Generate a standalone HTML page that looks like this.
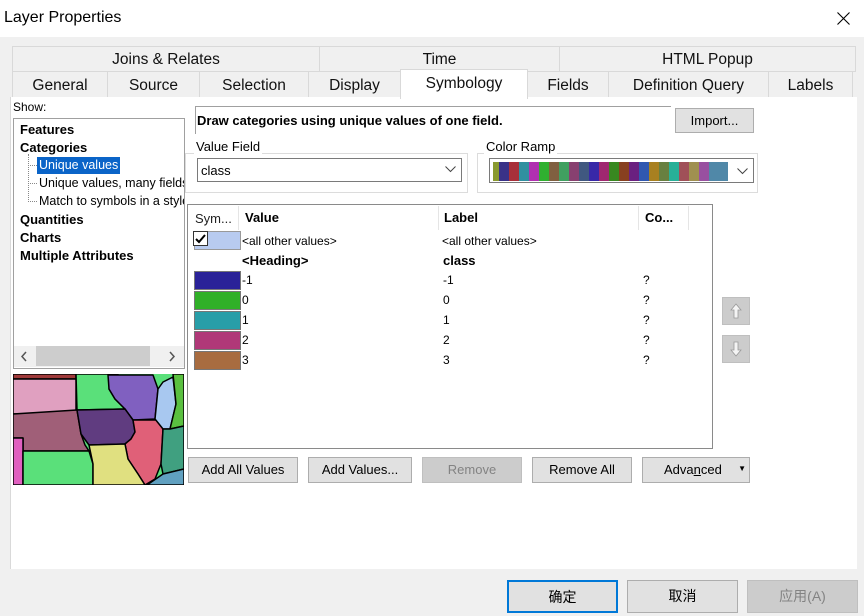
<!DOCTYPE html>
<html><head><meta charset="utf-8"><style>
*{box-sizing:border-box;margin:0;padding:0}
body{width:864px;height:616px;background:#f0f0f0;font-family:"Liberation Sans","Noto Sans CJK SC",sans-serif;font-size:12px;color:#000;position:relative;overflow:hidden}
.a{position:absolute}
.tab{position:absolute;border:1px solid #d9d9d9;background:#f0f0f0;font-size:15.5px;text-align:center;color:#111}
.btn{position:absolute;background:#e1e1e1;border:1px solid #adadad;font-size:13px;text-align:center;line-height:23px}
.t{position:absolute;font-size:12px;white-space:nowrap}
.b{font-weight:bold;font-size:13px}
.sw{position:absolute;left:194px;width:47px;height:19px;border:1px solid #777}
</style></head><body>
<div class="a" style="left:0;top:0;width:864px;height:37px;background:#fff"></div>
<div class="t" style="left:4px;top:9px;font-size:16px">Layer Properties</div>
<svg class="a" style="left:837px;top:12px" width="13" height="13"><path d="M0.5 0.5L12.5 12.5M12.5 0.5L0.5 12.5" stroke="#000" stroke-width="1.1"/></svg>

<div class="tab" style="left:12px;top:46px;width:308px;height:26px;line-height:26px">Joins &amp; Relates</div>
<div class="tab" style="left:319px;top:46px;width:241px;height:26px;line-height:26px">Time</div>
<div class="tab" style="left:559px;top:46px;width:297px;height:26px;line-height:26px">HTML Popup</div>
<div class="tab" style="left:12px;top:71px;width:96px;height:27px;line-height:27px">General</div>
<div class="tab" style="left:107px;top:71px;width:93px;height:27px;line-height:27px">Source</div>
<div class="tab" style="left:199px;top:71px;width:110px;height:27px;line-height:27px">Selection</div>
<div class="tab" style="left:308px;top:71px;width:93px;height:27px;line-height:27px">Display</div>
<div class="tab" style="left:527px;top:71px;width:82px;height:27px;line-height:27px">Fields</div>
<div class="tab" style="left:608px;top:71px;width:161px;height:27px;line-height:27px">Definition Query</div>
<div class="tab" style="left:768px;top:71px;width:85px;height:27px;line-height:27px">Labels</div>

<div class="a" style="left:10px;top:97px;width:847px;height:472px;background:#fff;border-left:1px solid #d9d9d9"></div>
<div class="tab" style="left:400px;top:69px;width:128px;height:30px;line-height:28px;background:#fff;border-bottom:none">Symbology</div>

<div class="t" style="left:13px;top:100px">Show:</div>
<div class="a" style="left:13px;top:118px;width:172px;height:251px;border:1px solid #a0a0a0;background:#fff;overflow:hidden"></div>
<div class="t b" style="left:20px;top:122px">Features</div>
<div class="t b" style="left:20px;top:140px">Categories</div>
<div class="a" style="left:28px;top:154px;height:48px;border-left:1px dotted #888"></div>
<div class="a" style="left:28px;top:165px;width:9px;border-top:1px dotted #888"></div>
<div class="a" style="left:28px;top:183px;width:9px;border-top:1px dotted #888"></div>
<div class="a" style="left:28px;top:201px;width:9px;border-top:1px dotted #888"></div>
<div class="t" style="left:37px;top:157px;background:#0a64c8;color:#fff;padding:0 2px;height:17px;line-height:17px;font-size:12.5px">Unique values</div>
<div class="t" style="left:39px;top:176px;width:145px;overflow:hidden;font-size:12.5px">Unique values, many fields</div>
<div class="t" style="left:39px;top:194px;width:145px;overflow:hidden;font-size:12.5px">Match to symbols in a style</div>
<div class="t b" style="left:20px;top:212px">Quantities</div>
<div class="t b" style="left:20px;top:230px">Charts</div>
<div class="t b" style="left:20px;top:248px">Multiple Attributes</div>
<div class="a" style="left:14px;top:346px;width:170px;height:21px;background:#f0f0f0"></div>
<div class="a" style="left:36px;top:346px;width:114px;height:20px;background:#cdcdcd"></div>
<svg class="a" style="left:20px;top:351px" width="8" height="11"><path d="M6 1L2 5.5L6 10" fill="none" stroke="#555" stroke-width="1.5"/></svg>
<svg class="a" style="left:168px;top:351px" width="8" height="11"><path d="M2 1L6 5.5L2 10" fill="none" stroke="#555" stroke-width="1.5"/></svg>

<svg class="a" style="left:13px;top:374px" width="171" height="111" viewBox="0 0 171 111">
<rect width="171" height="111" fill="#5ae07a"/>
<g stroke="#000" stroke-width="1.5" stroke-linejoin="round">
<polygon points="0,0 63,0 63,5 0,5" fill="#a03a3a"/>
<polygon points="0,5 63,5 63,40 0,40" fill="#e0a0c0"/>
<polygon points="63,0 105,0 96,15 102,25 112,35 64,36" fill="#5ae07a"/>
<polygon points="0,40 64,36 68,60 72,71 76,77 10,77 10,64 0,64" fill="#a05f78"/>
<polygon points="0,64 10,64 10,111 0,111" fill="#e060c0"/>
<polygon points="10,77 76,77 80,90 80,111 10,111" fill="#5ae07a"/>
<polygon points="95,1 140,1 145,15 142,45 120,46 112,35 102,25 96,15" fill="#8060c0"/>
<polygon points="64,36 112,35 120,46 122,58 118,65 112,70 76,71 68,60" fill="#603c80"/>
<polygon points="112,70 118,65 122,58 120,46 145,46 150,55 148,90 142,105 132,111 125,100 115,85" fill="#e06078"/>
<polygon points="76,71 112,70 115,85 125,100 132,111 80,111 80,90" fill="#e0e080"/>
<polygon points="142,45 145,15 150,8 160,3 163,30 157,55 150,55" fill="#a8c8f0"/>
<polygon points="160,0 171,0 171,52 157,55 163,30" fill="#5ac040"/>
<polygon points="150,55 157,55 171,52 171,95 150,100 148,90" fill="#40a080"/>
<polygon points="134,111 150,100 171,95 171,111" fill="#60a0c0"/>
</g>
</svg>

<div class="a" style="left:195px;top:106px;width:476px;height:28px;border-top:1px solid #a0a0a0;border-left:1px solid #a0a0a0"></div>
<div class="t b" style="left:197px;top:113px">Draw categories using unique values of one field.</div>
<div class="btn" style="left:675px;top:108px;width:79px;height:25px">Import...</div>

<div class="a" style="left:185px;top:153px;width:283px;height:40px;border:1px solid #dcdcdc"></div>
<div class="t" style="left:194px;top:139px;font-size:13px;background:#fff;padding:0 2px">Value Field</div>
<div class="a" style="left:197px;top:158px;width:265px;height:24px;border:1px solid #7a7a7a"></div>
<div class="t" style="left:201px;top:163px;font-size:13px">class</div>
<svg class="a" style="left:445px;top:166px" width="11" height="7"><path d="M0.5 0.5L5.5 5.5L10.5 0.5" fill="none" stroke="#444"/></svg>

<div class="a" style="left:477px;top:153px;width:281px;height:40px;border:1px solid #dcdcdc"></div>
<div class="t" style="left:484px;top:139px;font-size:13px;background:#fff;padding:0 2px">Color Ramp</div>
<div class="a" style="left:489px;top:158px;width:265px;height:25px;border:1px solid #7a7a7a"></div>
<div class="a" style="left:493px;top:162px;height:19px;display:flex">
<i style="width:6px;background:#8a9a30"></i><i style="width:10px;background:#3a3288"></i><i style="width:10px;background:#a8303a"></i><i style="width:10px;background:#3090a0"></i><i style="width:10px;background:#b030b0"></i><i style="width:10px;background:#30b030"></i><i style="width:10px;background:#806040"></i><i style="width:10px;background:#40a060"></i><i style="width:10px;background:#884070"></i><i style="width:10px;background:#405880"></i><i style="width:10px;background:#3828a8"></i><i style="width:10px;background:#a02870"></i><i style="width:10px;background:#388820"></i><i style="width:10px;background:#884020"></i><i style="width:10px;background:#6a2080"></i><i style="width:10px;background:#3058b0"></i><i style="width:10px;background:#a88020"></i><i style="width:10px;background:#688040"></i><i style="width:10px;background:#28b098"></i><i style="width:10px;background:#a05058"></i><i style="width:10px;background:#a09050"></i><i style="width:10px;background:#9850a0"></i><i style="width:19px;background:#5088a8"></i>
</div>
<svg class="a" style="left:737px;top:168px" width="11" height="7"><path d="M0.5 0.5L5.5 5.5L10.5 0.5" fill="none" stroke="#444"/></svg>

<div class="a" style="left:187px;top:204px;width:526px;height:245px;border:1px solid #8a8a8a"></div>
<div class="a" style="left:238px;top:206px;height:24px;border-left:1px solid #e5e5e5"></div>
<div class="a" style="left:438px;top:206px;height:24px;border-left:1px solid #e5e5e5"></div>
<div class="a" style="left:638px;top:206px;height:24px;border-left:1px solid #e5e5e5"></div>
<div class="a" style="left:688px;top:206px;height:24px;border-left:1px solid #e5e5e5"></div>
<div class="t" style="left:195px;top:211px;font-size:13px;color:#222">Sym...</div>
<div class="t b" style="left:245px;top:210px">Value</div>
<div class="t b" style="left:444px;top:210px">Label</div>
<div class="t b" style="left:645px;top:210px">Co...</div>
<div class="sw" style="top:231px;background:#b8cbf0;border-color:#999"></div>
<div class="a" style="left:193px;top:231px;width:15px;height:15px;border:1px solid #333;background:#fff"></div>
<svg class="a" style="left:195px;top:234px" width="11" height="10"><path d="M1 5L4 8L10 1" fill="none" stroke="#000" stroke-width="2"/></svg>
<div class="t" style="left:242px;top:234px">&lt;all other values&gt;</div>
<div class="t" style="left:442px;top:234px">&lt;all other values&gt;</div>
<div class="t b" style="left:242px;top:253px">&lt;Heading&gt;</div>
<div class="t b" style="left:443px;top:253px">class</div>
<div class="sw" style="top:271px;background:#2a2298"></div>
<div class="sw" style="top:291px;background:#30b028"></div>
<div class="sw" style="top:311px;background:#289ea8"></div>
<div class="sw" style="top:331px;background:#b03878"></div>
<div class="sw" style="top:351px;background:#a86c40"></div>
<div class="t" style="left:242px;top:273px">-1</div><div class="t" style="left:443px;top:273px">-1</div><div class="t" style="left:643px;top:273px">?</div>
<div class="t" style="left:242px;top:293px">0</div><div class="t" style="left:443px;top:293px">0</div><div class="t" style="left:643px;top:293px">?</div>
<div class="t" style="left:242px;top:313px">1</div><div class="t" style="left:443px;top:313px">1</div><div class="t" style="left:643px;top:313px">?</div>
<div class="t" style="left:242px;top:333px">2</div><div class="t" style="left:443px;top:333px">2</div><div class="t" style="left:643px;top:333px">?</div>
<div class="t" style="left:242px;top:353px">3</div><div class="t" style="left:443px;top:353px">3</div><div class="t" style="left:643px;top:353px">?</div>

<div class="a" style="left:722px;top:297px;width:28px;height:28px;background:#cccccc;border:1px solid #bfbfbf"></div>
<svg class="a" style="left:729px;top:303px" width="14" height="16"><path d="M7 1L2 7H5V15H9V7H12Z" fill="#f4f4f4" stroke="#999" stroke-width=".8"/></svg>
<div class="a" style="left:722px;top:335px;width:28px;height:28px;background:#cccccc;border:1px solid #bfbfbf"></div>
<svg class="a" style="left:729px;top:341px" width="14" height="16"><path d="M7 15L2 9H5V1H9V9H12Z" fill="#f4f4f4" stroke="#999" stroke-width=".8"/></svg>

<div class="btn" style="left:188px;top:457px;width:110px;height:26px">Add All Values</div>
<div class="btn" style="left:308px;top:457px;width:104px;height:26px">Add Values...</div>
<div class="btn" style="left:422px;top:457px;width:100px;height:26px;background:#cccccc;border-color:#bfbfbf;color:#838383">Remove</div>
<div class="btn" style="left:532px;top:457px;width:100px;height:26px">Remove All</div>
<div class="btn" style="left:642px;top:457px;width:108px;height:26px;text-align:left;padding-left:21px">Adva<u>n</u>ced<span style="position:absolute;right:3px;top:-1px;font-size:8px">&#9660;</span></div>

<div class="btn" style="left:507px;top:580px;width:111px;height:33px;line-height:31px;border:2px solid #0078d7;font-size:14px">确定</div>
<div class="btn" style="left:627px;top:580px;width:111px;height:33px;line-height:31px;font-size:14px">取消</div>
<div class="btn" style="left:747px;top:580px;width:111px;height:33px;line-height:31px;font-size:14px;background:#cccccc;border-color:#bfbfbf;color:#838383">应用(A)</div>
</body></html>
